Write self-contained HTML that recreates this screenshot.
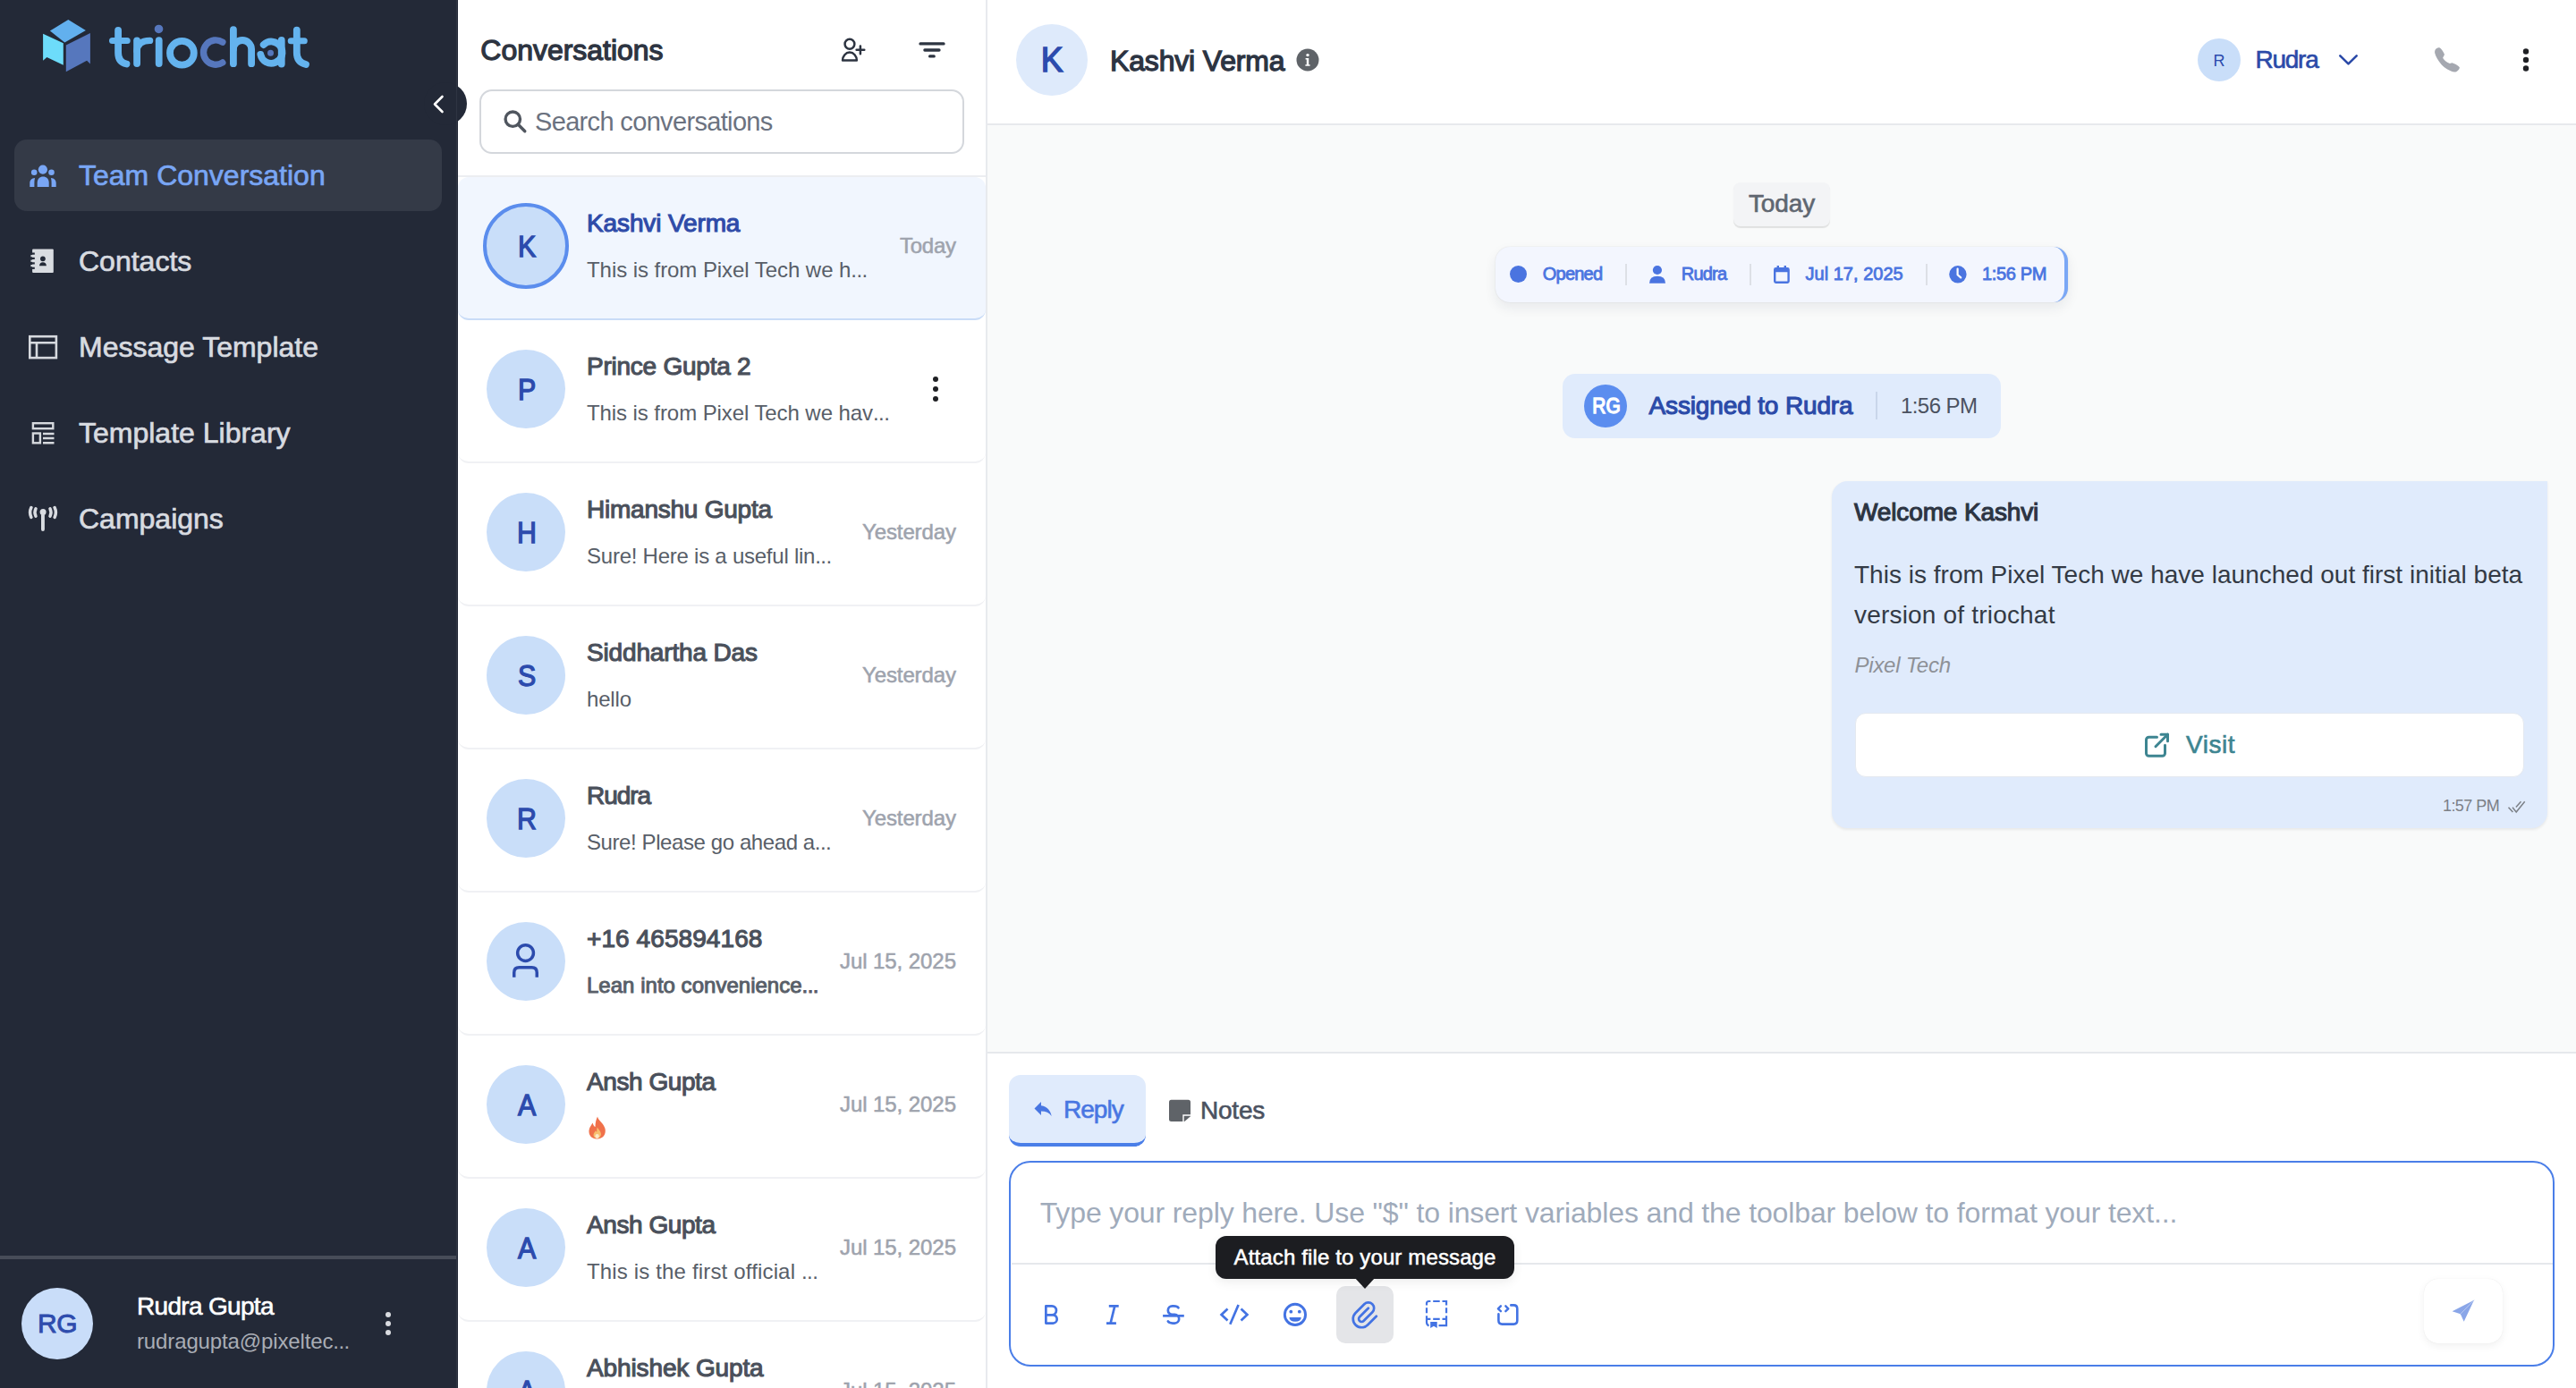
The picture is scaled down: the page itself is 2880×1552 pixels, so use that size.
<!DOCTYPE html>
<html><head><meta charset="utf-8">
<style>
*{box-sizing:border-box;margin:0;padding:0}
html,body{width:2880px;height:1552px;overflow:hidden;background:#fff}
body{font-family:"Liberation Sans",sans-serif;position:relative}
.a{position:absolute;white-space:nowrap}
#side{position:absolute;left:0;top:0;width:512px;height:1552px;background:#232937;z-index:3}
#conv{position:absolute;left:512px;top:0;width:592px;height:1552px;background:#fff;border-right:2px solid #e8eaee;overflow:hidden;z-index:1}
#main{position:absolute;left:1104px;top:0;width:1776px;height:1552px;background:#f9fafa;z-index:1}
.nav{position:absolute;left:16px;width:478px;height:80px;border-radius:14px}
.nav .t{position:absolute;left:72px;top:0;line-height:80px;font-size:32px;color:#d8dbe0;-webkit-text-stroke-width:0.7px}
.nav svg{position:absolute}
</style></head>
<body>
<div id="side">
<svg class="a" style="left:40px;top:15px" width="320" height="80" viewBox="0 0 320 80">
<path d="M15.9,19.5 L36.3,7.1 L55.9,18.9 L32.3,32.5 Z" fill="#62b0ee"/>
<path d="M8.1,22.7 L30.8,33.3 L30.8,57.8 L12.4,49.1 L8.1,52.8 Z" fill="#6ddcfa"/>
<path d="M33.8,35.4 L60.9,22.1 L60.9,56.5 L57.1,52.8 L33.8,65.2 Z" fill="#5677bd"/>
<g fill="none" stroke="#64b3ee" stroke-width="7.8" stroke-linecap="round" stroke-linejoin="round">
<path d="M92.1,19 V44 Q92.1,54.5 101.5,56.5"/><path d="M85.5,30.4 H102.2" stroke-width="7"/>
<path d="M113.1,56.1 V30.3"/><path d="M113.1,42 Q113.6,30.4 127.6,30.4" stroke-width="7.4"/>
<path d="M137.7,30.2 V56.1"/>
<circle cx="163.4" cy="44.25" r="13.4"/>
<path d="M220.9,18.1 V56.2"/><path d="M220.9,40.1 A10.1,10.1 0 0 1 241.1,40.1 V56.2"/>
<path d="M254.7,35 A12.2,12.2 0 1 1 251.3,45.9"/><path d="M274.75,30 V56.5"/>
<path d="M291.8,18.6 V44 Q291.8,54.5 302,57"/><path d="M285.2,30.75 H300.3" stroke-width="7"/>
</g>
<path d="M208.8,32.2 A13.7,13.7 0 1 0 208.8,55" fill="none" stroke="#5677bd" stroke-width="7.4" stroke-linecap="round"/>
<circle cx="137.5" cy="17.45" r="4.8" fill="#5677bd"/>
<circle cx="262.5" cy="44.35" r="3.5" fill="#5677bd"/>
</svg>
<div class="a" style="left:474px;top:92px;width:48px;height:48px;border-radius:50%;background:#232937"></div>
<svg class="a" style="left:480px;top:100px" width="24" height="32" viewBox="0 0 24 32"><path d="M14.5,8 L6,16.5 L14.5,25" fill="none" stroke="#fff" stroke-width="2.6" stroke-linecap="round" stroke-linejoin="round"/></svg>

<div class="nav" style="top:156px;background:#343a47">
<svg style="left:16px;top:28px" width="32" height="26" viewBox="32 184 32 26" fill="#79a6f5">
<circle cx="47.9" cy="189.6" r="5.1"/><circle cx="38.2" cy="192.8" r="3.3"/><circle cx="57.5" cy="192.8" r="3.3"/>
<path d="M41.7,209 V204.5 C41.7,200 44.5,197.6 48.2,197.6 C51.9,197.6 54.7,200 54.7,204.5 V209 Z"/>
<path d="M33.3,209 V204.5 C33.3,201.5 35.5,199 39,198.9 C38.5,201 38.4,203 38.4,205 V209 Z"/>
<path d="M62.7,209 V204.5 C62.7,201.5 60.5,199 57,198.9 C57.5,201 57.6,203 57.6,205 V209 Z"/>
</svg>
<div class="t" style="color:#79a6f5">Team Conversation</div></div>

<div class="nav" style="top:252px">
<svg style="left:16px;top:20px" width="32" height="36" viewBox="32 272 32 36">
<rect x="36.1" y="278.6" width="23.7" height="26.4" rx="1" fill="#d9dce1"/>
<g fill="#232937"><rect x="35.5" y="282.5" width="3.3" height="2.2"/><rect x="35.5" y="287.8" width="3.3" height="2.2"/><rect x="35.5" y="293.3" width="3.3" height="2.2"/><rect x="35.5" y="298.7" width="3.3" height="2.2"/></g>
<g fill="#d9dce1"><rect x="34.4" y="285.1" width="2.4" height="2.2"/><rect x="34.4" y="290.6" width="2.4" height="2.2"/><rect x="34.4" y="296" width="2.4" height="2.2"/></g>
<circle cx="47.9" cy="289.3" r="2.9" fill="#232937"/><path d="M44,297.2 Q44.3,293.3 47.95,293.3 Q51.6,293.3 51.9,297.2 Z" fill="#232937"/>
</svg>
<div class="t">Contacts</div></div>

<div class="nav" style="top:348px">
<svg style="left:15px;top:20px" width="34" height="36" viewBox="31 368 34 36" fill="none" stroke="#d6d9de" stroke-width="2.6">
<rect x="33.3" y="376.2" width="29.6" height="23.9"/><path d="M33.3,383.3 H62.9 M41,383.3 V400"/>
</svg>
<div class="t">Message Template</div></div>

<div class="nav" style="top:444px">
<svg style="left:15px;top:20px" width="34" height="36" viewBox="31 464 34 36" fill="none" stroke="#d6d9de" stroke-width="2.4">
<rect x="36.9" y="473.2" width="22.4" height="6"/><rect x="36.9" y="484.5" width="8" height="10.8"/><path d="M48,485 H60.5 M48,490 H60.5 M48,495.3 H60.5"/>
</svg>
<div class="t">Template Library</div></div>

<div class="nav" style="top:540px">
<svg style="left:15px;top:20px" width="34" height="36" viewBox="31 560 34 36">
<circle cx="48.1" cy="572.6" r="3.5" fill="#d9dce1"/><path d="M47.95,576 V592" stroke="#d9dce1" stroke-width="3.9" stroke-linecap="round"/>
<g fill="none" stroke="#d9dce1" stroke-width="3.5" stroke-linecap="round"><path d="M34.9,567.6 Q32.3,573 34.9,578.4"/><path d="M40,568.8 Q37.9,573 40,577.2"/><path d="M56,568.8 Q58.1,573 56,577.2"/><path d="M61.1,567.6 Q63.7,573 61.1,578.4"/></g>
</svg>
<div class="t">Campaigns</div></div>

<div class="a" style="left:510px;top:0;width:1px;height:1552px;background:#2f3542"></div>
<div class="a" style="left:0;top:1404px;width:510px;height:4px;background:#474c58"></div>
<div class="a" style="left:24px;top:1440px;width:80px;height:80px;border-radius:50%;background:#c9ddf9;color:#2e4cad;font-size:30px;text-align:center;line-height:80px;letter-spacing:-0.5px;-webkit-text-stroke:0.9px #2e4cad">RG</div>
<div class="a" style="left:153px;top:1443px;font-size:28px;color:#fff;line-height:36px;letter-spacing:-0.68px;-webkit-text-stroke:0.6px #fff">Rudra Gupta</div>
<div class="a" style="left:153px;top:1484px;font-size:24px;color:#a9adb5;line-height:32px;letter-spacing:-0.13px">rudragupta@pixeltec<span style="letter-spacing:-0.55px">...</span></div>
<svg class="a" style="left:424px;top:1464px" width="20" height="32" viewBox="0 0 20 32" fill="#d9dbe0"><circle cx="10" cy="6" r="3"/><circle cx="10" cy="16" r="3"/><circle cx="10" cy="26" r="3"/></svg>
</div>
<div id="conv"></div>
<div class="a" style="left:0;top:0;width:2880px;height:1552px;z-index:2;pointer-events:none">
<div class="a" style="left:537.3px;top:35.8px;font-size:32px;line-height:40px;color:#2d3441;font-weight:normal;font-style:normal;letter-spacing:-0.02px;-webkit-text-stroke:1.28px #2d3441;">Conversations</div>
<svg class="a" style="left:930px;top:38px" width="44" height="36" viewBox="930 38 44 36" fill="none" stroke="#2d3441" stroke-width="2.5" stroke-linecap="round">
<circle cx="949.95" cy="49.25" r="5.4"/><path d="M942.05,67.6 A7.9,9 0 0 1 957.85,67.6 Z" stroke-linejoin="round"/><path d="M961.9,51.6 V60.2 M957.6,55.8 H966.3"/></svg>
<svg class="a" style="left:1020px;top:40px" width="44" height="30" viewBox="1020 40 44 30" fill="none" stroke="#2d3441" stroke-width="3.3" stroke-linecap="round">
<path d="M1029,48.9 H1055 M1033.9,56 H1050 M1039.6,62.9 H1044.2"/></svg>
<div class="a" style="left:536px;top:100px;width:542px;height:72px;border:2.5px solid #d4d7dc;border-radius:14px;background:#fff"></div>
<svg class="a" style="left:558px;top:118px" width="36" height="36" viewBox="558 118 36 36" fill="none" stroke="#50565f" stroke-width="3.4" stroke-linecap="round"><circle cx="573.3" cy="133.2" r="8.2"/><path d="M579.6,139.5 L586.8,146.7"/></svg>
<div class="a" style="left:598.0px;top:117.8px;font-size:29px;line-height:36px;color:#6b7280;font-weight:normal;font-style:normal;letter-spacing:-0.66px;">Search conversations</div>
<div class="a" style="left:512px;top:195.5px;width:590px;height:2px;background:#eceef1"></div>
<div class="a" style="left:512px;top:198px;width:590px;height:160px;background:#f1f6fe;border-bottom:2.5px solid #c9dcf7;border-radius:12px"></div>
<div class="a" style="left:540px;top:227px;width:96px;height:96px;border-radius:50%;background:#c9def9;border:4px solid #5b8ded"></div>
<div class="a" style="left:577.5px;top:254.9px;font-size:33px;line-height:41px;color:#2c4bad;font-weight:normal;font-style:normal;letter-spacing:0.00px;-webkit-text-stroke:1.32px #2c4bad;transform:scaleX(0.92);transform-origin:50% 50%;">K</div>
<div class="a" style="left:656.0px;top:231.8px;font-size:28px;line-height:35px;color:#2f4ba8;font-weight:normal;font-style:normal;letter-spacing:-0.12px;-webkit-text-stroke:1.12px #2f4ba8;">Kashvi Verma</div>
<div class="a" style="left:656.0px;top:286.7px;font-size:24px;line-height:30px;color:#585e68;font-weight:normal;font-style:normal;letter-spacing:-0.06px;">This is from Pixel Tech we h<span style="letter-spacing:-0.55px">...</span></div>
<div class="a" style="left:1006.0px;top:260.0px;font-size:24px;line-height:30px;color:#9ea3ad;font-weight:normal;font-style:normal;letter-spacing:-0.26px;-webkit-text-stroke:0.53px #9ea3ad;">Today</div>
<div class="a" style="left:512px;top:358px;width:590px;height:160px;border-bottom:2px solid #f0f1f4;border-radius:0 0 12px 12px"></div>
<div class="a" style="left:544px;top:391px;width:88px;height:88px;border-radius:50%;background:#c9def9"></div>
<div class="a" style="left:577.5px;top:414.9px;font-size:33px;line-height:41px;color:#2c4bad;font-weight:normal;font-style:normal;letter-spacing:0.00px;-webkit-text-stroke:1.32px #2c4bad;transform:scaleX(0.92);transform-origin:50% 50%;">P</div>
<div class="a" style="left:656.0px;top:391.8px;font-size:28px;line-height:35px;color:#4a505b;font-weight:normal;font-style:normal;letter-spacing:-0.24px;-webkit-text-stroke:1.12px #4a505b;">Prince Gupta 2</div>
<div class="a" style="left:656.0px;top:446.7px;font-size:24px;line-height:30px;color:#585e68;font-weight:normal;font-style:normal;letter-spacing:-0.08px;">This is from Pixel Tech we hav<span style="letter-spacing:-0.55px">...</span></div>
<svg class="a" style="left:1036px;top:419px" width="20" height="32" viewBox="0 0 20 32" fill="#1f2024"><circle cx="10" cy="5" r="3"/><circle cx="10" cy="16" r="3"/><circle cx="10" cy="27" r="3"/></svg>
<div class="a" style="left:512px;top:518px;width:590px;height:160px;border-bottom:2px solid #f0f1f4;border-radius:0 0 12px 12px"></div>
<div class="a" style="left:544px;top:551px;width:88px;height:88px;border-radius:50%;background:#c9def9"></div>
<div class="a" style="left:576.6px;top:574.9px;font-size:33px;line-height:41px;color:#2c4bad;font-weight:normal;font-style:normal;letter-spacing:0.00px;-webkit-text-stroke:1.32px #2c4bad;transform:scaleX(0.92);transform-origin:50% 50%;">H</div>
<div class="a" style="left:656.0px;top:551.8px;font-size:28px;line-height:35px;color:#4a505b;font-weight:normal;font-style:normal;letter-spacing:-0.24px;-webkit-text-stroke:1.12px #4a505b;">Himanshu Gupta</div>
<div class="a" style="left:656.0px;top:606.7px;font-size:24px;line-height:30px;color:#585e68;font-weight:normal;font-style:normal;letter-spacing:-0.24px;">Sure! Here is a useful lin<span style="letter-spacing:-0.55px">...</span></div>
<div class="a" style="left:964.0px;top:580.0px;font-size:24px;line-height:30px;color:#9ea3ad;font-weight:normal;font-style:normal;letter-spacing:-0.11px;-webkit-text-stroke:0.53px #9ea3ad;">Yesterday</div>
<div class="a" style="left:512px;top:678px;width:590px;height:160px;border-bottom:2px solid #f0f1f4;border-radius:0 0 12px 12px"></div>
<div class="a" style="left:544px;top:711px;width:88px;height:88px;border-radius:50%;background:#c9def9"></div>
<div class="a" style="left:577.5px;top:734.9px;font-size:33px;line-height:41px;color:#2c4bad;font-weight:normal;font-style:normal;letter-spacing:0.00px;-webkit-text-stroke:1.32px #2c4bad;transform:scaleX(0.92);transform-origin:50% 50%;">S</div>
<div class="a" style="left:656.0px;top:711.8px;font-size:28px;line-height:35px;color:#4a505b;font-weight:normal;font-style:normal;letter-spacing:-0.16px;-webkit-text-stroke:1.12px #4a505b;">Siddhartha Das</div>
<div class="a" style="left:656.0px;top:766.7px;font-size:24px;line-height:30px;color:#585e68;font-weight:normal;font-style:normal;letter-spacing:-0.17px;">hello</div>
<div class="a" style="left:964.0px;top:740.0px;font-size:24px;line-height:30px;color:#9ea3ad;font-weight:normal;font-style:normal;letter-spacing:-0.11px;-webkit-text-stroke:0.53px #9ea3ad;">Yesterday</div>
<div class="a" style="left:512px;top:838px;width:590px;height:160px;border-bottom:2px solid #f0f1f4;border-radius:0 0 12px 12px"></div>
<div class="a" style="left:544px;top:871px;width:88px;height:88px;border-radius:50%;background:#c9def9"></div>
<div class="a" style="left:576.6px;top:894.9px;font-size:33px;line-height:41px;color:#2c4bad;font-weight:normal;font-style:normal;letter-spacing:0.00px;-webkit-text-stroke:1.32px #2c4bad;transform:scaleX(0.92);transform-origin:50% 50%;">R</div>
<div class="a" style="left:656.0px;top:871.8px;font-size:28px;line-height:35px;color:#4a505b;font-weight:normal;font-style:normal;letter-spacing:-1.02px;-webkit-text-stroke:1.12px #4a505b;">Rudra</div>
<div class="a" style="left:656.0px;top:926.7px;font-size:24px;line-height:30px;color:#585e68;font-weight:normal;font-style:normal;letter-spacing:-0.41px;">Sure! Please go ahead a<span style="letter-spacing:-0.55px">...</span></div>
<div class="a" style="left:964.0px;top:900.0px;font-size:24px;line-height:30px;color:#9ea3ad;font-weight:normal;font-style:normal;letter-spacing:-0.11px;-webkit-text-stroke:0.53px #9ea3ad;">Yesterday</div>
<div class="a" style="left:512px;top:998px;width:590px;height:160px;border-bottom:2px solid #f0f1f4;border-radius:0 0 12px 12px"></div>
<div class="a" style="left:544px;top:1031px;width:88px;height:88px;border-radius:50%;background:#c9def9"></div>
<svg class="a" style="left:568px;top:1051px" width="40" height="48" viewBox="0 0 40 48" fill="none" stroke="#2c4bad" stroke-width="3.46"><circle cx="19.55" cy="14.6" r="8.9"/><path d="M6.75,41.7 V36.5 Q6.75,30.8 12.5,30.8 H26.5 Q32.25,30.8 32.25,36.5 V41.7"/></svg>
<div class="a" style="left:656.0px;top:1031.8px;font-size:28px;line-height:35px;color:#4a505b;font-weight:normal;font-style:normal;letter-spacing:0.08px;-webkit-text-stroke:1.12px #4a505b;">+16 465894168</div>
<div class="a" style="left:656.0px;top:1086.7px;font-size:24px;line-height:30px;color:#585e68;font-weight:normal;font-style:normal;letter-spacing:0.02px;-webkit-text-stroke:0.96px #585e68;">Lean into convenience<span style="letter-spacing:-0.55px">...</span></div>
<div class="a" style="left:939.0px;top:1060.0px;font-size:24px;line-height:30px;color:#9ea3ad;font-weight:normal;font-style:normal;letter-spacing:-0.07px;-webkit-text-stroke:0.53px #9ea3ad;">Jul 15, 2025</div>
<div class="a" style="left:512px;top:1158px;width:590px;height:160px;border-bottom:2px solid #f0f1f4;border-radius:0 0 12px 12px"></div>
<div class="a" style="left:544px;top:1191px;width:88px;height:88px;border-radius:50%;background:#c9def9"></div>
<div class="a" style="left:577.5px;top:1214.9px;font-size:33px;line-height:41px;color:#2c4bad;font-weight:normal;font-style:normal;letter-spacing:0.00px;-webkit-text-stroke:1.32px #2c4bad;transform:scaleX(0.92);transform-origin:50% 50%;">A</div>
<div class="a" style="left:656.0px;top:1191.8px;font-size:28px;line-height:35px;color:#4a505b;font-weight:normal;font-style:normal;letter-spacing:-0.43px;-webkit-text-stroke:1.12px #4a505b;">Ansh Gupta</div>
<svg class="a" style="left:655px;top:1247px" width="26" height="28" viewBox="0 0 26 28"><path d="M13,1.5 C14,6 20,9 21.5,15 C23,22 18.5,26.5 12.5,26.5 C6.5,26.5 3,22.5 3.5,17 C4,13 6.5,11 7.5,8.5 C8.5,11 9,12.5 10.5,13 C10.5,8.5 11.5,4.5 13,1.5 Z" fill="#f0714a"/><path d="M12.8,13.5 C14.5,16.5 17.5,18.5 16.8,22 C16.3,24.5 14.5,25.8 12.5,25.8 C10,25.8 8.3,24 8.6,21.5 C8.9,19.5 10.3,18.7 10.8,17.2 C11.5,18.3 12,18.8 12.3,18.5 C12.2,16.8 12.2,15 12.8,13.5 Z" fill="#f7bf6e"/><ellipse cx="12.6" cy="23.5" rx="2.2" ry="2.4" fill="#fde9c8"/></svg>
<div class="a" style="left:939.0px;top:1220.0px;font-size:24px;line-height:30px;color:#9ea3ad;font-weight:normal;font-style:normal;letter-spacing:-0.07px;-webkit-text-stroke:0.53px #9ea3ad;">Jul 15, 2025</div>
<div class="a" style="left:512px;top:1318px;width:590px;height:160px;border-bottom:2px solid #f0f1f4;border-radius:0 0 12px 12px"></div>
<div class="a" style="left:544px;top:1351px;width:88px;height:88px;border-radius:50%;background:#c9def9"></div>
<div class="a" style="left:577.5px;top:1374.9px;font-size:33px;line-height:41px;color:#2c4bad;font-weight:normal;font-style:normal;letter-spacing:0.00px;-webkit-text-stroke:1.32px #2c4bad;transform:scaleX(0.92);transform-origin:50% 50%;">A</div>
<div class="a" style="left:656.0px;top:1351.8px;font-size:28px;line-height:35px;color:#4a505b;font-weight:normal;font-style:normal;letter-spacing:-0.43px;-webkit-text-stroke:1.12px #4a505b;">Ansh Gupta</div>
<div class="a" style="left:656.0px;top:1406.7px;font-size:24px;line-height:30px;color:#585e68;font-weight:normal;font-style:normal;letter-spacing:0.16px;">This is the first official <span style="letter-spacing:-0.55px">...</span></div>
<div class="a" style="left:939.0px;top:1380.0px;font-size:24px;line-height:30px;color:#9ea3ad;font-weight:normal;font-style:normal;letter-spacing:-0.07px;-webkit-text-stroke:0.53px #9ea3ad;">Jul 15, 2025</div>
<div class="a" style="left:512px;top:1478px;width:590px;height:160px;border-bottom:2px solid #f0f1f4;border-radius:0 0 12px 12px"></div>
<div class="a" style="left:544px;top:1511px;width:88px;height:88px;border-radius:50%;background:#c9def9"></div>
<div class="a" style="left:577.5px;top:1534.9px;font-size:33px;line-height:41px;color:#2c4bad;font-weight:normal;font-style:normal;letter-spacing:0.00px;-webkit-text-stroke:1.32px #2c4bad;transform:scaleX(0.92);transform-origin:50% 50%;">A</div>
<div class="a" style="left:656.0px;top:1511.8px;font-size:28px;line-height:35px;color:#4a505b;font-weight:normal;font-style:normal;letter-spacing:-0.12px;-webkit-text-stroke:1.12px #4a505b;">Abhishek Gupta</div>
<div class="a" style="left:939.0px;top:1540.0px;font-size:24px;line-height:30px;color:#9ea3ad;font-weight:normal;font-style:normal;letter-spacing:-0.07px;-webkit-text-stroke:0.53px #9ea3ad;">Jul 15, 2025</div>
<div class="a" style="left:1104px;top:0;width:1776px;height:138px;background:#fff;border-bottom:2px solid #e7e9ed;box-sizing:content-box"></div>
<div class="a" style="left:1136px;top:27px;width:80px;height:80px;border-radius:50%;background:#deeafb"></div>
<div class="a" style="left:1163.3px;top:42.2px;font-size:39px;line-height:49px;color:#2c4bad;font-weight:normal;font-style:normal;letter-spacing:0.00px;-webkit-text-stroke:1.56px #2c4bad;transform:scaleX(0.95);">K</div>
<div class="a" style="left:1241.0px;top:47.6px;font-size:32px;line-height:40px;color:#2c3442;font-weight:normal;font-style:normal;letter-spacing:-0.17px;-webkit-text-stroke:1.28px #2c3442;">Kashvi Verma</div>
<svg class="a" style="left:1449px;top:54px" width="26" height="26" viewBox="0 0 26 26"><circle cx="13" cy="13" r="12.5" fill="#5f6368"/><circle cx="13" cy="7.6" r="1.7" fill="#fff"/><path d="M10.6,11 H14.2 V18.2 H15.6 V19.8 H10.4 V18.2 H11.8 V12.6 H10.6 Z" fill="#fff"/></svg>
<div class="a" style="left:2457px;top:43px;width:48px;height:48px;border-radius:50%;background:#c9def9"></div>
<div class="a" style="left:2474.5px;top:57.0px;font-size:18px;line-height:22px;color:#2c4bad;font-weight:normal;font-style:normal;letter-spacing:0.00px;">R</div>
<div class="a" style="left:2521.5px;top:48.8px;font-size:28px;line-height:35px;color:#2b4aa8;font-weight:normal;font-style:normal;letter-spacing:-1.25px;-webkit-text-stroke:0.62px #2b4aa8;">Rudra</div>
<svg class="a" style="left:2610px;top:55px" width="32" height="24" viewBox="2610 55 32 24" fill="none" stroke="#2b4aa8" stroke-width="2.6" stroke-linecap="round" stroke-linejoin="round"><path d="M2616.3,62.3 L2625.5,71.4 L2634.7,62.3"/></svg>
<svg class="a" style="left:2715px;top:48px" width="40" height="40" viewBox="2715 48 40 40"><path fill="#a5a8b0" d="M2727.4,53.2 C2729.5,54.5 2732,58 2733,61 L2731.1,64.7 C2732.5,67 2735,69.5 2738.9,71.1 L2741.5,70.2 C2744.5,71 2749,73.5 2749.9,75.4 C2749.5,78 2746.5,80.5 2744.4,80.6 C2739,79.5 2733,76 2729.4,71.9 C2726,68 2723,63 2722.1,59 C2722,57 2722.5,55.5 2723.6,54.6 C2725,53.5 2726.5,53 2727.4,53.2 Z"/></svg>
<svg class="a" style="left:2814px;top:50px" width="20" height="34" viewBox="0 0 20 34" fill="#1f2024"><circle cx="10" cy="7.5" r="3.2"/><circle cx="10" cy="17" r="3.2"/><circle cx="10" cy="26.5" r="3.2"/></svg>
<div class="a" style="left:1938px;top:204px;width:108px;height:49px;border-radius:8px;background:#f3f4f6;box-shadow:0 1.5px 1px rgba(0,0,0,0.10)"></div>
<div class="a" style="left:1955.0px;top:209.7px;font-size:28px;line-height:35px;color:#5f6670;font-weight:normal;font-style:normal;letter-spacing:-0.13px;-webkit-text-stroke:0.62px #5f6670;">Today</div>
<div class="a" style="left:1672px;top:276px;width:640px;height:62px;border-radius:16px;background:#f3f6fe;border-right:4.5px solid #7aa7f5;box-shadow:0 6px 14px rgba(30,40,60,0.08),0 0 1.5px rgba(0,0,0,0.12)"></div>
<div class="a" style="left:1688.3px;top:297.2px;width:19.2px;height:19.2px;border-radius:50%;background:#4a74e0"></div>
<div class="a" style="left:1724.8px;top:294.4px;font-size:20px;line-height:25px;color:#4a74e0;font-weight:normal;font-style:normal;letter-spacing:-0.78px;-webkit-text-stroke:0.80px #4a74e0;">Opened</div>
<div class="a" style="left:1816.7px;top:295.2px;width:2px;height:23.4px;background:#dde0e6"></div>
<div class="a" style="left:1955.7px;top:295.2px;width:2px;height:23.4px;background:#dde0e6"></div>
<div class="a" style="left:2152.8px;top:295.2px;width:2px;height:23.4px;background:#dde0e6"></div>
<svg class="a" style="left:1840px;top:294px" width="26" height="26" viewBox="1840 294 26 26" fill="#4a74e0"><circle cx="1852.9" cy="302" r="5.1"/><path d="M1844,316.8 Q1844,308.7 1853,308.7 Q1862,308.7 1862,316.8 Z"/></svg>
<div class="a" style="left:1879.8px;top:294.4px;font-size:20px;line-height:25px;color:#4a74e0;font-weight:normal;font-style:normal;letter-spacing:-0.79px;-webkit-text-stroke:0.80px #4a74e0;">Rudra</div>
<svg class="a" style="left:1980px;top:294px" width="24" height="26" viewBox="1980 294 24 26" fill="none" stroke="#4a74e0" stroke-width="2.4"><rect x="1984.2" y="300.2" width="15.4" height="15.5" rx="1.2"/><path d="M1984.2,302.5 H1999.6" stroke-width="3.5"/><path d="M1987.8,297 V301 M1995.8,297 V301"/></svg>
<div class="a" style="left:2018.5px;top:294.4px;font-size:20px;line-height:25px;color:#4a74e0;font-weight:normal;font-style:normal;letter-spacing:0.02px;-webkit-text-stroke:0.80px #4a74e0;">Jul 17, 2025</div>
<svg class="a" style="left:2176px;top:294px" width="26" height="26" viewBox="2176 294 26 26"><circle cx="2188.9" cy="306.8" r="9.7" fill="#4a74e0"/><path d="M2188.6,300.5 V307.2 L2192.2,310.4" fill="none" stroke="#fff" stroke-width="2.2" stroke-linecap="round" stroke-linejoin="round"/></svg>
<div class="a" style="left:2216.0px;top:294.4px;font-size:20px;line-height:25px;color:#4a74e0;font-weight:normal;font-style:normal;letter-spacing:-0.35px;-webkit-text-stroke:0.80px #4a74e0;">1:56 PM</div>
<div class="a" style="left:1747px;top:418px;width:490px;height:72px;border-radius:14px;background:#e0ebfc"></div>
<div class="a" style="left:1771px;top:430px;width:48px;height:48px;border-radius:50%;background:#5b8def"></div>
<div class="a" style="left:1777.5px;top:438.8px;font-size:24px;line-height:30px;color:#fff;font-weight:normal;font-style:normal;letter-spacing:0.00px;-webkit-text-stroke:1.40px #fff;transform:scaleX(0.87);transform-origin:50% 50%;">RG</div>
<div class="a" style="left:1843.5px;top:435.8px;font-size:28px;line-height:35px;color:#2b4aa8;font-weight:normal;font-style:normal;letter-spacing:-0.14px;-webkit-text-stroke:1.12px #2b4aa8;">Assigned to Rudra</div>
<div class="a" style="left:2097px;top:438px;width:2px;height:31px;background:#c9d6ea"></div>
<div class="a" style="left:2124.9px;top:438.5px;font-size:24px;line-height:30px;color:#4b5260;font-weight:normal;font-style:normal;letter-spacing:-0.53px;">1:56 PM</div>
<div class="a" style="left:2048px;top:538px;width:800px;height:388px;border-radius:18px 0 18px 18px;background:#e0ebfc;box-shadow:0 1.5px 3px rgba(0,0,0,0.07)"></div>
<div class="a" style="left:2073.0px;top:554.8px;font-size:28px;line-height:35px;color:#2c3442;font-weight:normal;font-style:normal;letter-spacing:-0.13px;-webkit-text-stroke:1.12px #2c3442;">Welcome Kashvi</div>
<div class="a" style="left:2073.0px;top:624.8px;font-size:28px;line-height:35px;color:#333a45;font-weight:normal;font-style:normal;letter-spacing:0.01px;">This is from Pixel Tech we have launched out first initial beta</div>
<div class="a" style="left:2073.0px;top:670.3px;font-size:28px;line-height:35px;color:#333a45;font-weight:normal;font-style:normal;letter-spacing:0.19px;">version of triochat</div>
<div class="a" style="left:2073.6px;top:729.4px;font-size:24px;line-height:30px;color:#8e9197;font-weight:normal;font-style:italic;letter-spacing:-0.27px;">Pixel Tech</div>
<div class="a" style="left:2074px;top:796.5px;width:748px;height:72.5px;border-radius:12px;background:#fff;border:1px solid #e4e9f0"></div>
<svg class="a" style="left:2390px;top:812px" width="40" height="40" viewBox="2390 812 40 40"><g transform="translate(2393.5,815.2) scale(1.5)" fill="none" stroke="#3d8591" stroke-width="2" stroke-linecap="round" stroke-linejoin="round"><path d="M12 6h-6a2 2 0 0 0 -2 2v10a2 2 0 0 0 2 2h10a2 2 0 0 0 2 -2v-6"/><path d="M11 13l9 -9"/><path d="M15 4h5v5"/></g></svg>
<div class="a" style="left:2444.0px;top:814.5px;font-size:28px;line-height:35px;color:#3d8591;font-weight:normal;font-style:normal;letter-spacing:0.55px;-webkit-text-stroke:0.62px #3d8591;">Visit</div>
<div class="a" style="left:2730.9px;top:889.7px;font-size:18px;line-height:22px;color:#7c8087;font-weight:normal;font-style:normal;letter-spacing:-0.52px;">1:57 PM</div>
<svg class="a" style="left:2802px;top:893px" width="24" height="18" viewBox="2802 893 24 18" fill="none" stroke="#7c8087" stroke-width="1.5"><path d="M2804.5,902.8 L2809.4,908 M2809,902.8 L2813.2,908 L2822.7,896.3 M2812.9,902.6 L2818.5,896.3"/></svg>
<div class="a" style="left:1104px;top:1176px;width:1776px;height:376px;background:#fff;border-top:2px solid #e6e8ec"></div>
<div class="a" style="left:1128px;top:1202px;width:153px;height:79.5px;border-radius:13px;background:#e0ebfc;border-bottom:4px solid #4a7ee8"></div>
<svg class="a" style="left:1150px;top:1224px" width="30" height="30" viewBox="1150 1224 30 30"><g transform="translate(1153.3,1226.7) scale(1.067)"><path fill="#4876e2" d="M10 9V5l-7 7 7 7v-4.1c5 0 8.5 1.6 11 5.1-1-5-4-10-11-11z"/></g></svg>
<div class="a" style="left:1189.0px;top:1222.6px;font-size:28px;line-height:35px;color:#4876e2;font-weight:normal;font-style:normal;letter-spacing:-0.97px;-webkit-text-stroke:0.62px #4876e2;">Reply</div>
<svg class="a" style="left:1304px;top:1227px" width="30" height="30" viewBox="1304 1227 30 30"><path d="M1309.5,1229.8 H1328.5 Q1331,1229.8 1331,1232.3 V1248.3 L1324.3,1254 H1309.5 Q1307,1254 1307,1251.5 V1232.3 Q1307,1229.8 1309.5,1229.8 Z" fill="#5f6368"/><path d="M1323,1254.5 V1247 H1331.5" fill="none" stroke="#fff" stroke-width="1.4"/></svg>
<div class="a" style="left:1342.0px;top:1223.8px;font-size:28px;line-height:35px;color:#4b5260;font-weight:normal;font-style:normal;letter-spacing:-0.21px;-webkit-text-stroke:0.62px #4b5260;">Notes</div>
<div class="a" style="left:1128px;top:1298px;width:1728px;height:229.5px;border-radius:24px;border:2.5px solid #4a7ee8;background:#fff"></div>
<div class="a" style="left:1162.7px;top:1335.6px;font-size:32px;line-height:40px;color:#a0abbb;font-weight:normal;font-style:normal;letter-spacing:-0.13px;">Type your reply here. Use "$" to insert variables and the toolbar below to format your text...</div>
<div class="a" style="left:1130.5px;top:1411.7px;width:1723px;height:2px;background:#e6e8ec"></div>
<div class="a" style="left:1494px;top:1438px;width:64px;height:63.6px;border-radius:10px;background:#e4e5e8"></div>
<svg class="a" style="left:1150px;top:1440px" width="580" height="60" viewBox="1150 1440 580 60" fill="none" stroke="#4373e3" stroke-width="2.7">
<path d="M1169.35,1460.35 H1176 A4.97,4.97 0 0 1 1176,1470.3 H1169.35 Z M1176,1470.3 H1177.3 A4.63,4.63 0 0 1 1177.3,1479.55 H1169.35 V1470.3" stroke-linejoin="round"/>
<path d="M1239.8,1460.35 H1250.7 M1237,1479.55 H1247.9 M1246.3,1460.35 L1241.6,1479.55"/>
<g transform="translate(1295.55,1453.5) scale(1.371)" stroke-width="1.97" stroke-linecap="round" stroke-linejoin="round"><path d="M16 6.5a4 2 0 0 0 -4 -1.5h-1a3.5 3.5 0 0 0 0 7h2a3.5 3.5 0 0 1 0 7h-1.5a4 2 0 0 1 -4 -1.5"/></g>
<path d="M1300.1,1471.3 H1323.8"/>
<path d="M1372.5,1463.5 L1365.6,1470 L1372.5,1476.5 M1387.5,1463.5 L1394.4,1470 L1387.5,1476.5 M1384.6,1459 L1375.3,1480.8"/>
<circle cx="1447.95" cy="1469.9" r="11.6" stroke-width="2.9"/>
</svg>
<svg class="a" style="left:1150px;top:1440px" width="580" height="60" viewBox="1150 1440 580 60" fill="#4373e3">
<circle cx="1443.3" cy="1466.7" r="1.9"/><circle cx="1452.8" cy="1466.7" r="1.9"/>
<path d="M1441.5,1472.9 H1454.7 Q1454.7,1477.7 1448.1,1477.7 Q1441.5,1477.7 1441.5,1472.9 Z"/>
</svg>
<svg class="a" style="left:1500px;top:1445px" width="50" height="50" viewBox="1500 1445 50 50"><g transform="translate(1507.3,1452.2) scale(1.5)" fill="none" stroke="#4373e3" stroke-width="1.8" stroke-linecap="round" stroke-linejoin="round"><path d="M15 7l-6.5 6.5a1.5 1.5 0 0 0 3 3l6.5 -6.5a3 3 0 0 0 -6 -6l-6.5 6.5a4.5 4.5 0 0 0 9 9l6.5 -6.5"/></g></svg>
<svg class="a" style="left:1585px;top:1445px" width="140" height="48" viewBox="1585 1445 140 48" fill="none" stroke="#4373e3" stroke-width="2.2">
<path d="M1595,1459.4 V1457.5 Q1595,1455 1597.5,1455 H1599.4 M1602.2,1455 H1609.7 M1612.5,1455 H1617.05 V1459.4 M1595,1462.2 V1468.3 M1617.05,1462.2 V1468.3 M1595,1471.3 V1478.5 Q1595,1481.2 1597.5,1482.4 M1617.05,1471.3 V1482.2 H1608.5 M1595,1474.9 H1599.4 M1602.2,1474.9 H1609.7 M1612.5,1474.9 H1617.05"/>
<path d="M1599.2,1478 H1606.7 V1485 L1602.95,1482.7 L1599.2,1485 Z" fill="#4373e3" stroke="none"/>
<path d="M1689.3,1459.4 H1692.3 Q1696.3,1459.4 1696.3,1463.4 V1476.6 Q1696.3,1480.6 1692.3,1480.6 H1679.4 Q1675.4,1480.6 1675.4,1476.6 V1469.4" stroke-width="2.6" stroke-linecap="round"/>
<path d="M1677.9,1460.3 L1674.9,1463.3 L1677.9,1466.2 M1683.3,1460.3 L1686.3,1463.3 L1683.3,1466.2" stroke-width="2.4" stroke-linecap="round" stroke-linejoin="round"/>
</svg>
<div class="a" style="left:2710px;top:1430px;width:88px;height:72px;border-radius:16px;background:#fff;box-shadow:0 3px 10px rgba(0,0,0,0.06),0 0 1px rgba(0,0,0,0.10)"></div>
<svg class="a" style="left:2736px;top:1448px" width="36" height="36" viewBox="2736 1448 36 36"><path d="M2766,1453.7 L2741.6,1466.3 L2750.8,1469.3 L2754.7,1477.7 Z" fill="#8aa6e8"/><path d="M2766,1453.7 L2750.8,1469.3" stroke="#b7c9f0" stroke-width="1"/></svg>
<div class="a" style="left:1359px;top:1382px;width:334px;height:48px;border-radius:12px;background:#1c1d21;box-shadow:0 4px 12px rgba(0,0,0,0.07)"></div>
<svg class="a" style="left:1512px;top:1428px" width="28" height="16" viewBox="1512 1428 28 16"><path d="M1514.9,1429 H1537 L1526,1441 Z" fill="#1c1d21"/></svg>
<div class="a" style="left:1379.6px;top:1391.4px;font-size:24px;line-height:30px;color:#fff;font-weight:normal;font-style:normal;letter-spacing:0.13px;-webkit-text-stroke:0.53px #fff;">Attach file to your message</div>
</div>
<div id="main"></div>
</body></html>
